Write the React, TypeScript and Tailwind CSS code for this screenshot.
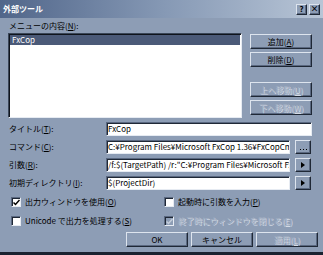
import { ReactNode } from 'react';

const raised =
  'border border-t-[#dde4ee] border-l-[#dde4ee] border-r-[#1f2836] border-b-[#1f2836] shadow-[inset_-1px_-1px_0_#5a6880]';
const sunken =
  'border border-t-[#5a6880] border-l-[#5a6880] border-r-[#e6ebf2] border-b-[#e6ebf2] shadow-[inset_1px_1px_0_#1f2836]';

function U({ children }: { children: ReactNode }) {
  return <span className="underline underline-offset-1">{children}</span>;
}

function Btn({
  children,
  disabled,
  className = '',
}: {
  children: ReactNode;
  disabled?: boolean;
  className?: string;
}) {
  return (
    <div
      className={`${raised} flex items-center justify-center bg-[#8d9db5] ${
        disabled ? 'text-[#a6b2c4] [text-shadow:1px_1px_0_#d4dbe6]' : 'text-black'
      } ${className}`}
    >
      {children}
    </div>
  );
}

function Field({ label, value, button }: { label: ReactNode; value?: string; button?: string }) {
  return (
    <div className="flex items-center h-[14px]">
      <div className="w-[98px] pl-[1px]">{label}</div>
      <div
        className={`${sunken} bg-white h-[14px] flex items-center px-[1px] overflow-hidden whitespace-nowrap ${
          button ? 'w-[184px]' : 'w-[206px]'
        }`}
      >
        {value}
      </div>
      {button && (
        <Btn className="ml-[5px] w-[16px] h-[14px] text-[8px] leading-none">
          {button === '...' ? (
            <svg width="7" height="3" viewBox="0 0 7 3" className="mt-[4px]">
              <rect x="0" y="1" width="1" height="1" fill="#000" />
              <rect x="3" y="1" width="1" height="1" fill="#000" />
              <rect x="6" y="1" width="1" height="1" fill="#000" />
            </svg>
          ) : (
            <svg width="4" height="6" viewBox="0 0 4 6">
              <path d="M0 0 L4 3 L0 6 Z" fill="#000" />
            </svg>
          )}
        </Btn>
      )}
    </div>
  );
}

function Check({
  checked,
  disabled,
  children,
}: {
  checked?: boolean;
  disabled?: boolean;
  children: ReactNode;
}) {
  return (
    <div className="flex items-center gap-[4px] h-[12px]">
      <div
        className={`${sunken} w-[10px] h-[10px] flex items-center justify-center ${
          disabled ? 'bg-[#8d9db5]' : 'bg-white'
        }`}
      >
        {checked && (
          <svg width="7" height="7" viewBox="0 0 7 7">
            <path
              d="M0.5 3.5 L2.5 5.5 L6.5 1"
              stroke={disabled ? '#c4cdda' : '#000'}
              strokeWidth="1.5"
              fill="none"
            />
          </svg>
        )}
      </div>
      <span className={disabled ? 'text-[#a6b2c4] [text-shadow:1px_1px_0_#d4dbe6]' : ''}>
        {children}
      </span>
    </div>
  );
}

export default function App() {
  return (
    <div
      className="w-[323px] h-[255px] bg-[#8d9db5] border-b-[3px] border-b-[#1a2230] text-[8px] leading-[10px] text-black overflow-hidden"
      style={{ fontFamily: '"Noto Sans CJK JP", "Noto Sans", sans-serif' }}
    >
      {/* Title bar */}
      <div className="h-[18px] flex items-center justify-between pl-[3px] pr-[3px] bg-gradient-to-r from-[#51668a] via-[#8598b4] to-[#b8c5d6]">
        <span className="text-white font-bold text-[8px]">外部ツール</span>
        <div className="flex gap-[2px]">
          <Btn className="w-[11px] h-[11px] text-[8px] font-bold leading-none">?</Btn>
          <Btn className="w-[11px] h-[11px] text-[8px] font-bold leading-none">×</Btn>
        </div>
      </div>

      <div className="px-[8px] pt-[3px]">
        <div className="h-[11px] pl-[1px]">
          メニューの内容(<U>N</U>):
        </div>

        {/* Menu list + buttons */}
        <div className="flex mt-[1px]">
          <div className="border border-t-[#3a4658] border-l-[#3a4658] border-r-[#e6ebf2] border-b-[#e6ebf2] shadow-[inset_1px_1px_0_#0f141c] bg-white w-[234px] h-[85px] p-[1px]">
            <div className="bg-[#4b5a78] text-white h-[10px] pl-[2px] leading-[10px]">FxCop</div>
          </div>
          <div className="ml-[8px] flex flex-col">
            <Btn className="w-[62px] h-[15px] mt-[1px]">
              追加(<U>A</U>)
            </Btn>
            <Btn className="w-[62px] h-[15px] mt-[3px]">
              削除(<U>D</U>)
            </Btn>
            <Btn disabled className="w-[62px] h-[15px] mt-[15px]">
              上へ移動(<U>U</U>)
            </Btn>
            <Btn disabled className="w-[62px] h-[15px] mt-[3px]">
              下へ移動(<U>W</U>)
            </Btn>
          </div>
        </div>

        {/* Fields */}
        <div className="flex flex-col gap-[4px] mt-[4px]">
          <Field
            label={
              <>
                タイトル(<U>T</U>):
              </>
            }
            value="FxCop"
          />
          <Field
            label={
              <>
                コマンド(<U>C</U>):
              </>
            }
            value="C:¥Program Files¥Microsoft FxCop 1.36¥FxCopCmd.exe"
            button="..."
          />
          <Field
            label={
              <>
                引数(<U>R</U>):
              </>
            }
            value='/f:$(TargetPath) /r:"C:¥Program Files¥Microsoft FxCop'
            button=">"
          />
          <Field
            label={
              <>
                初期ディレクトリ(<U>I</U>):
              </>
            }
            value="$(ProjectDir)"
            button=">"
          />
        </div>

        {/* Options */}
        <div className="grid grid-cols-[153px_1fr] gap-y-[7px] mt-[6px] pl-[3px]">
          <Check checked>
            出力ウィンドウを使用(<U>O</U>)
          </Check>
          <Check>
            起動時に引数を入力(<U>P</U>)
          </Check>
          <Check>
            Unicode で出力を処理する(<U>S</U>)
          </Check>
          <Check checked disabled>
            終了時にウィンドウを閉じる(<U>E</U>)
          </Check>
        </div>

        {/* Dialog buttons */}
        <div className="flex justify-end gap-[3px] mt-[5px]">
          <Btn className="w-[62px] h-[15px]">OK</Btn>
          <Btn className="w-[62px] h-[15px]">キャンセル</Btn>
          <Btn disabled className="w-[62px] h-[15px] mr-[-3px]">
            適用(<U>L</U>)
          </Btn>
        </div>
      </div>
    </div>
  );
}
